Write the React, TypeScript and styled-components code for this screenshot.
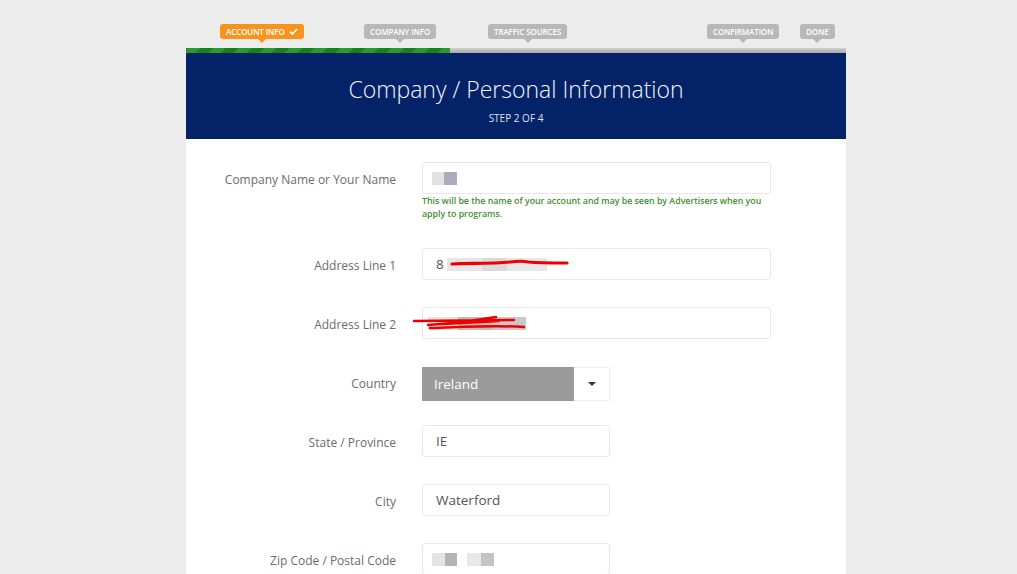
import React from "react";
import styled, { createGlobalStyle } from "styled-components";

const GlobalStyle = createGlobalStyle`
  html, body {
    margin: 0;
    padding: 0;
    background: #ececec;
    font-family: "Open Sans", "Liberation Sans", sans-serif;
    overflow: hidden;
  }
`;

const Page = styled.div`
  padding-left: 186px;
  height: 574px;
  overflow: hidden;
`;

const Card = styled.div`
  width: 660px;
`;

const Steps = styled.div`
  position: relative;
  height: 48px;
`;

const StepTag = styled.div<{ $left: number; $active?: boolean }>`
  position: absolute;
  top: 24px;
  left: ${(p) => p.$left}px;
  height: 15px;
  padding: 0 6px;
  border-radius: 3px;
  display: flex;
  align-items: center;
  gap: 4px;
  font-size: 8px;
  font-weight: 600;
  letter-spacing: -0.1px;
  color: #fff;
  white-space: nowrap;
  background: ${(p) => (p.$active ? "#f7941d" : "#b8b8b8")};
  &::after {
    content: "";
    position: absolute;
    left: 50%;
    bottom: -4px;
    margin-left: -4px;
    border-left: 4px solid transparent;
    border-right: 4px solid transparent;
    border-top: 4px solid ${(p) => (p.$active ? "#f7941d" : "#b8b8b8")};
  }
`;

const Check = styled.svg`
  display: block;
`;

const Progress = styled.div`
  display: flex;
  height: 5px;
  background: linear-gradient(#d2d2d2, #a8a8a8);
`;

const ProgressDone = styled.div<{ $width: number }>`
  width: ${(p) => p.$width}px;
  background: repeating-linear-gradient(
    -45deg,
    #2a9b2a 0 9px,
    #1b7f1f 9px 18px
  );
`;

const Header = styled.div`
  height: 86px;
  background: #032268;
  box-sizing: border-box;
  padding-top: 22px;
  text-align: center;
  color: #fff;
`;

const Title = styled.h1`
  margin: 0;
  font-size: 23px;
  font-weight: 300;
  line-height: 28px;
  color: #f2f4f8;
`;

const StepText = styled.div`
  margin-top: 8px;
  font-size: 10px;
  line-height: 14px;
  color: #dfe3ec;
`;

const Body = styled.div`
  background: #fff;
  padding: 23px 0 40px;
  display: grid;
  grid-template-columns: 210px 349px;
  column-gap: 26px;
  row-gap: 27px;
`;

const Label = styled.label`
  align-self: start;
  height: 32px;
  padding-top: 3px;
  box-sizing: border-box;
  display: flex;
  align-items: center;
  justify-content: flex-end;
  font-size: 12px;
  color: #6b6b6b;
`;

const Field = styled.div<{ $short?: boolean }>`
  position: relative;
  width: ${(p) => (p.$short ? "188px" : "349px")};
`;

const Input = styled.div`
  height: 32px;
  box-sizing: border-box;
  border: 1px solid #e8e8e8;
  border-radius: 3px;
  padding-left: 13px;
  display: flex;
  align-items: center;
  font-size: 13.5px;
  color: #555;
`;

const Help = styled.div`
  margin-top: 1px;
  font-size: 8.8px;
  font-weight: 600;
  line-height: 13px;
  color: #3f8f2f;
`;

const Blur = styled.span<{ $w: number; $c: string; $gap?: number }>`
  display: inline-block;
  width: ${(p) => p.$w}px;
  height: 13px;
  margin-left: ${(p) => p.$gap ?? 0}px;
  background: ${(p) => p.$c};
`;

const Select = styled.div`
  display: flex;
  height: 34px;
  margin-top: 1px;
  margin-bottom: -3px;
`;

const SelectValue = styled.div`
  width: 152px;
  background: #9b9b9b;
  color: #fff;
  font-size: 13.5px;
  display: flex;
  align-items: center;
  padding-left: 12px;
  box-sizing: border-box;
`;

const SelectArrow = styled.div`
  width: 36px;
  border: 1px solid #f0f0f0;
  border-left: none;
  box-sizing: border-box;
  display: flex;
  align-items: center;
  justify-content: center;
  &::before {
    content: "";
    border-left: 4px solid transparent;
    border-right: 4px solid transparent;
    border-top: 4px solid #333;
  }
`;

const Scribble = styled.svg<{ $left: number; $top: number }>`
  position: absolute;
  left: ${(p) => p.$left}px;
  top: ${(p) => p.$top}px;
  overflow: visible;
  pointer-events: none;
`;

const steps = [
  { name: "ACCOUNT INFO", left: 34, active: true },
  { name: "COMPANY INFO", left: 178 },
  { name: "TRAFFIC SOURCES", left: 302 },
  { name: "CONFIRMATION", left: 521 },
  { name: "DONE", left: 614 },
];

export default function App() {
  return (
    <>
      <GlobalStyle />
      <Page>
        <Card>
          <Steps>
            {steps.map((s) => (
              <StepTag key={s.name} $left={s.left} $active={s.active}>
                {s.name}
                {s.active && (
                  <Check width="9" height="7" viewBox="0 0 9 7">
                    <path
                      d="M1 3.6 L3.4 6 L8 1"
                      stroke="#fff"
                      strokeWidth="1.8"
                      fill="none"
                    />
                  </Check>
                )}
              </StepTag>
            ))}
          </Steps>
          <Progress>
            <ProgressDone $width={264} />
          </Progress>
          <Header>
            <Title>Company / Personal Information</Title>
            <StepText>STEP 2 OF 4</StepText>
          </Header>
          <Body>
            <Label>Company Name or Your Name</Label>
            <Field>
              <Input>
                <Blur $w={12} $c="#e2e2e2" $gap={-4} />
                <Blur $w={13} $c="#a9adbf" />
              </Input>
              <Help>
                This will be the name of your account and may be seen by
                Advertisers when you
                <br />
                apply to programs.
              </Help>
            </Field>

            <Label>Address Line 1</Label>
            <Field>
              <Input>
                8
                <Blur $w={35} $c="#e6e6e6" $gap={3} />
                <Blur $w={25} $c="#dadada" />
                <Blur $w={40} $c="#e8e8e8" />
              </Input>
              <Scribble $left={28} $top={11} width="120" height="10">
                <path
                  d="M2 5 C20 4 40 5 60 3 C68 2 74 2 78 3 C90 4 105 4 117 4"
                  stroke="#ee0000"
                  strokeWidth="3.2"
                  fill="none"
                  strokeLinecap="round"
                />
              </Scribble>
            </Field>

            <Label>Address Line 2</Label>
            <Field>
              <Input>
                <Blur $w={30} $c="#e4e4e4" $gap={-8} />
                <Blur $w={35} $c="#bcbcbc" />
                <Blur $w={33} $c="#c8c8cc" />
              </Input>
              <Scribble $left={-8} $top={8} width="112" height="16">
                <path
                  d="M0 6 L100 5 M14 10 C40 8 70 4 82 2 M16 13 C50 12 80 10 110 12 M30 9 L85 6"
                  stroke="#ee0000"
                  strokeWidth="2.5"
                  fill="none"
                  strokeLinecap="round"
                />
              </Scribble>
            </Field>

            <Label>Country</Label>
            <Field $short>
              <Select>
                <SelectValue>Ireland</SelectValue>
                <SelectArrow />
              </Select>
            </Field>

            <Label>State / Province</Label>
            <Field $short>
              <Input>IE</Input>
            </Field>

            <Label>City</Label>
            <Field $short>
              <Input>Waterford</Input>
            </Field>

            <Label>Zip Code / Postal Code</Label>
            <Field $short>
              <Input>
                <Blur $w={13} $c="#e4e4e4" $gap={-4} />
                <Blur $w={12} $c="#b4b4b4" />
                <Blur $w={14} $c="#e8e8e8" $gap={10} />
                <Blur $w={13} $c="#c4c4c4" />
              </Input>
            </Field>
          </Body>
        </Card>
      </Page>
    </>
  );
}
